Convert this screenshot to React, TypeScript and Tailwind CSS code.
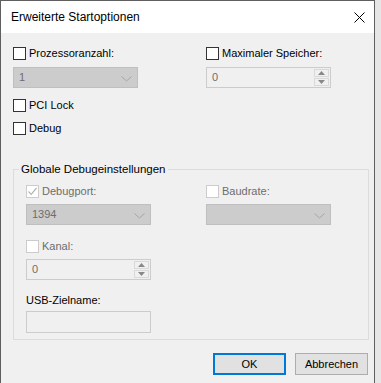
import React from "react";

const Chevron = () => (
  <svg width="11" height="6" viewBox="0 0 11 6" className="absolute right-[5px] top-[8px]">
    <path d="M0.5 0.5 L5.5 5 L10.5 0.5" fill="none" stroke="#a6a6a6" strokeWidth="1" />
  </svg>
);

function Box({ checked, disabled }: { checked?: boolean; disabled?: boolean }) {
  return (
    <div
      className={
        "w-[13px] h-[13px] shrink-0 border flex items-center justify-center " +
        (disabled ? "border-[#cccccc] bg-white" : "border-[#333333] bg-white")
      }
    >
      {checked && (
        <svg width="11" height="11" viewBox="0 0 11 11">
          <path d="M1.5 5.5 L4.2 8.3 L9.5 2" fill="none" stroke="#b4b4b4" strokeWidth="1.2" />
        </svg>
      )}
    </div>
  );
}

function Check({ label, checked, disabled }: { label: string; checked?: boolean; disabled?: boolean }) {
  return (
    <div className="flex items-center h-[13px]">
      <Box checked={checked} disabled={disabled} />
      <span className={"ml-[3px] leading-[13px] whitespace-nowrap " + (disabled ? "text-[#6d6d6d]" : "text-black")}>
        {label}
      </span>
    </div>
  );
}

function Combo({ value }: { value: string }) {
  return (
    <div className="relative w-[125px] h-[21px] bg-[#cccccc] border border-[#bfbfbf] flex items-center pl-[5px] text-[#6d6d6d]">
      {value}
      <Chevron />
    </div>
  );
}

function Spin({ value }: { value: string }) {
  return (
    <div className="relative w-[125px] h-[21px] bg-[#f0f0f0] border border-[#cccccc] flex items-center pl-[5px] text-[#6d6d6d]">
      {value}
      <div className="absolute right-[1px] top-[1px] w-[15px] h-[17px] flex flex-col gap-[1px]">
        <div className="flex-1 bg-[#f0f0f0] border border-[#d9d9d9] flex items-center justify-center">
          <svg width="7" height="4" viewBox="0 0 7 4"><path d="M0 4 L3.5 0 L7 4 Z" fill="#888" /></svg>
        </div>
        <div className="flex-1 bg-[#f0f0f0] border border-[#d9d9d9] flex items-center justify-center">
          <svg width="7" height="4" viewBox="0 0 7 4"><path d="M0 0 L3.5 4 L7 0 Z" fill="#888" /></svg>
        </div>
      </div>
    </div>
  );
}

export default function App() {
  return (
    <div
      className="w-[381px] h-[383px] bg-[#e6e6e6] flex overflow-hidden text-[11px]"
      style={{ fontFamily: '"Liberation Sans", Arial, sans-serif' }}
    >
      <div className="w-[375px] h-[383px] border-t border-l border-r border-[#5f5f5f] bg-[#f0f0f0] flex flex-col">
        <div className="h-[32px] bg-white flex items-center justify-between pl-[10px] pr-[6px]">
          <span className="text-[12px] text-black">Erweiterte Startoptionen</span>
          <svg width="11" height="11" viewBox="0 0 11 11" className="mr-[3px]">
            <path d="M0.5 0.5 L10.5 10.5 M10.5 0.5 L0.5 10.5" stroke="#000" strokeWidth="1" />
          </svg>
        </div>
        <div className="flex flex-col pl-[12px] pt-[14px]">
          <div className="flex">
            <div className="w-[193px] flex flex-col gap-[7px]">
              <Check label="Prozessoranzahl:" />
              <Combo value="1" />
            </div>
            <div className="flex flex-col gap-[7px]">
              <Check label="Maximaler Speicher:" />
              <Spin value="0" />
            </div>
          </div>
          <div className="mt-[11px] flex flex-col gap-[10px]">
            <Check label="PCI Lock" />
            <Check label="Debug" />
          </div>
          <fieldset className="mt-[27px] w-[356px] h-[178px] border border-[#dcdcdc]">
            <legend className="ml-[5px] px-[2px] text-[11.5px] text-black leading-[15px]">Globale Debugeinstellungen</legend>
            <div className="flex pl-[12px] pt-[8px]">
              <div className="w-[180px] flex flex-col">
                <Check label="Debugport:" checked disabled />
                <div className="mt-[6px]">
                  <Combo value="1394" />
                </div>
                <div className="mt-[15px]">
                  <Check label="Kanal:" disabled />
                </div>
                <div className="mt-[6px]">
                  <Spin value="0" />
                </div>
                <div className="mt-[13px] leading-[15px] text-black">USB-Zielname:</div>
                <div className="mt-[3px] w-[125px] h-[22px] border border-[#cccccc] bg-[#f0f0f0]" />
              </div>
              <div className="flex flex-col">
                <Check label="Baudrate:" disabled />
                <div className="mt-[6px]">
                  <Combo value="" />
                </div>
              </div>
            </div>
          </fieldset>
          <div className="mt-[13px] flex justify-end gap-[9px] pr-[6px]">
            <button className="w-[73px] h-[22px] bg-[#e1e1e1] border-2 border-[#0078d7] text-black text-[11px]">OK</button>
            <button className="w-[73px] h-[22px] bg-[#e1e1e1] border border-[#adadad] text-black text-[11px]">Abbrechen</button>
          </div>
        </div>
      </div>
    </div>
  );
}
